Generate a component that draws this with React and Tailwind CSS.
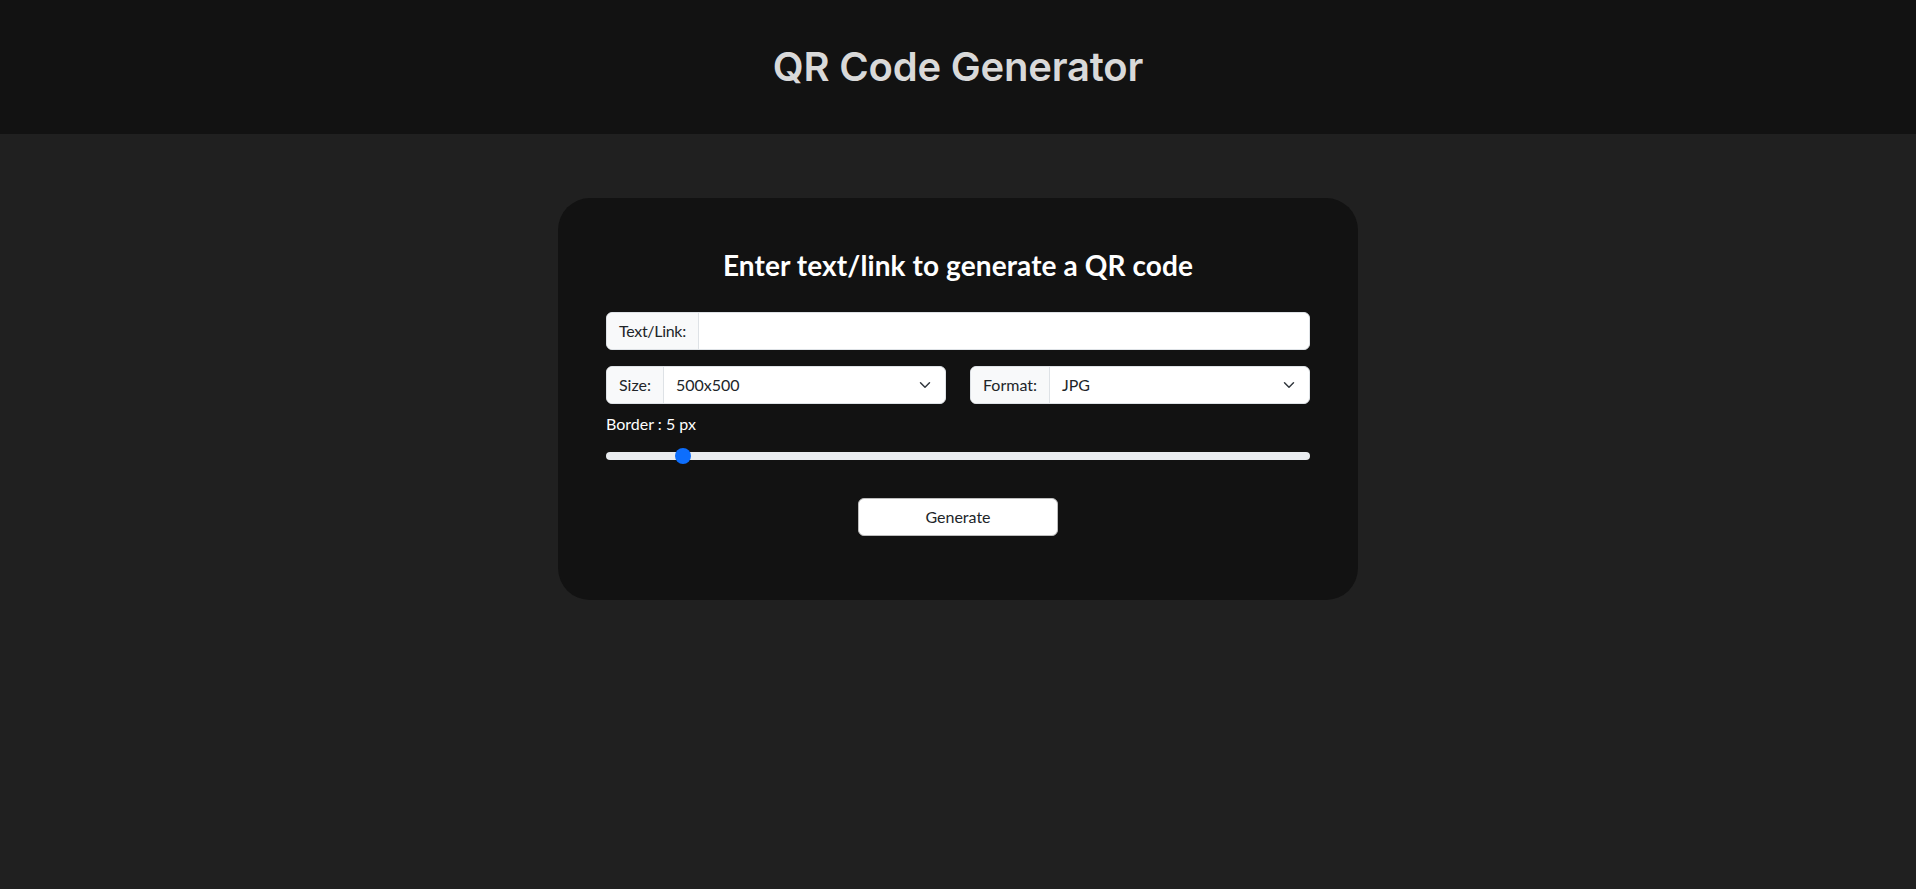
import React from "react";

function Chevron() {
  return (
    <svg width="16" height="12" viewBox="0 0 16 16" fill="none" className="shrink-0">
      <path d="m2 5 6 6 6-6" stroke="#343a40" strokeWidth="2" strokeLinecap="round" strokeLinejoin="round" />
    </svg>
  );
}

function SelectGroup({ label, value }) {
  return (
    <div className="flex h-[38px] w-full rounded-[6px] border border-[#dee2e6] bg-white overflow-hidden">
      <div className="flex items-center px-3 bg-[#f8f9fa] border-r border-[#dee2e6] text-[#212529]">{label}</div>
      <div className="flex flex-1 items-center justify-between pl-3 pr-3 text-[#212529]">
        <span>{value}</span>
        <Chevron />
      </div>
    </div>
  );
}

export default function App() {
  return (
    <div className="min-h-screen bg-[#202020]" style={{ fontFamily: 'Lato, "Open Sans", sans-serif' }}>
      <header className="h-[134px] bg-[#121212] flex items-center justify-center">
        <h1 className="text-[40px] font-semibold text-[#d9d9d9] tracking-[-0.2px]" style={{ fontFamily: 'Inter, "Noto Sans", sans-serif' }}>
          QR Code Generator
        </h1>
      </header>
      <main className="flex justify-center pt-16">
        <div className="w-[800px] rounded-[32px] bg-[#121212] px-12 pt-12 pb-16 text-base">
          <h2 className="text-center text-[28px] leading-[38px] font-bold text-white mb-[28px] tracking-[0.1px]">
            Enter text/link to generate a QR code
          </h2>
          <div className="flex h-[38px] rounded-[6px] border border-[#dee2e6] bg-white overflow-hidden mb-4">
            <div className="flex items-center px-3 bg-[#f8f9fa] border-r border-[#dee2e6] text-[#212529] tracking-[-0.3px]">Text/Link:</div>
            <div className="flex-1" />
          </div>
          <div className="grid grid-cols-2 gap-6 mb-2">
            <SelectGroup label="Size:" value="500x500" />
            <SelectGroup label="Format:" value="JPG" />
          </div>
          <div className="text-white leading-6 mb-2">Border : 5 px</div>
          <div className="h-6 flex items-center">
            <div className="relative h-2 w-full rounded-full bg-[#e9ecef]">
              <div className="absolute left-[69px] top-1/2 -translate-y-1/2 h-4 w-4 rounded-full bg-[#0d6efd]" />
            </div>
          </div>
          <div className="flex justify-center mt-[30px]">
            <button className="h-[38px] w-[200px] rounded-[6px] border border-[#bdbdbd] bg-white text-[#212529]">
              Generate
            </button>
          </div>
        </div>
      </main>
    </div>
  );
}
